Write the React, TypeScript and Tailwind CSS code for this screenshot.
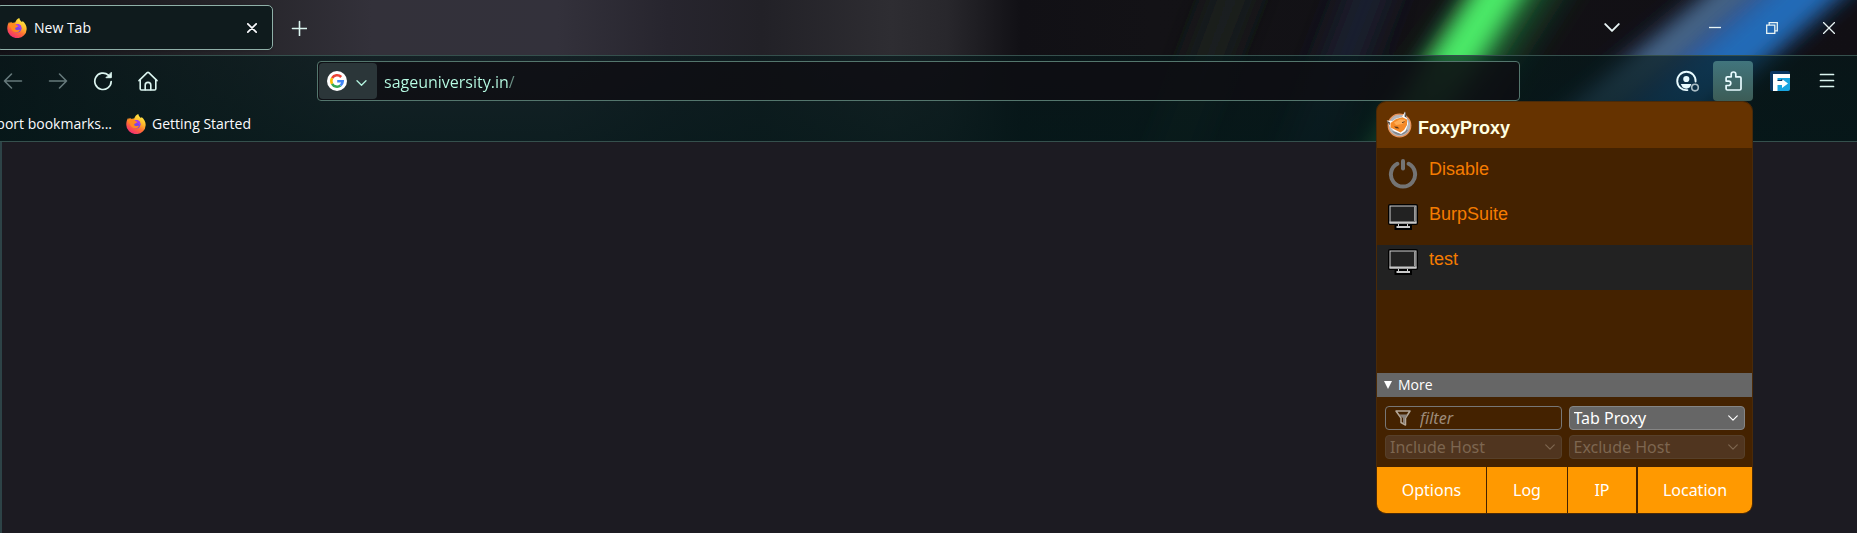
import React from "react";

function Wallpaper() {
  return (
    <svg
      aria-hidden="true"
      className="absolute inset-0 h-full w-full"
      viewBox="0 0 1857 142"
      preserveAspectRatio="none"
    >
      <defs>
        <linearGradient id="haze" x1="0" x2="1" y1="0" y2="0">
          <stop offset="0" stopColor="#131217" />
          <stop offset="0.06" stopColor="#1c1b20" />
          <stop offset="0.13" stopColor="#26252a" />
          <stop offset="0.2" stopColor="#33313a" />
          <stop offset="0.3" stopColor="#33313b" />
          <stop offset="0.36" stopColor="#27252e" />
          <stop offset="0.41" stopColor="#222127" />
          <stop offset="0.48" stopColor="#2e2d32" />
          <stop offset="0.51" stopColor="#28272c" />
          <stop offset="0.55" stopColor="#111015" />
          <stop offset="0.62" stopColor="#131216" />
          <stop offset="1" stopColor="#110f14" />
        </linearGradient>
        <filter id="soft" x="-30%" y="-30%" width="160%" height="160%">
          <feGaussianBlur stdDeviation="11" />
        </filter>
        <filter id="wide" x="-50%" y="-50%" width="200%" height="200%">
          <feGaussianBlur stdDeviation="17" />
        </filter>
      </defs>
      <rect width="1857" height="142" fill="url(#haze)" />
      <g filter="url(#wide)">
        <path d="M1238-60 1270-60 1170 200 1140 200Z" fill="#1a2820" />
        <path d="M1370-60 1410-60 1310 200 1270 200Z" fill="#1a2436" />
        <path d="M1510-60 1590-60 1400 240 1310 240Z" fill="#1f6a34" opacity="0.7" />
        <path d="M1790-60 1880-60 1625 160 1520 160Z" fill="#2a4a86" />
      </g>
      <g filter="url(#soft)">
        <path d="M1506-60 1557-60 1392 200 1336 200Z" fill="#4ceb68" />
        <path d="M1776-60 1814-60 1556 160 1512 160Z" fill="#4c6c8c" />
        <path d="M1828-60 1902-60 1652 160 1576 160Z" fill="#246cb8" />
      </g>
    </svg>
  );
}

function FirefoxLogo({ id }: { id: string }) {
  return (
    <svg aria-hidden="true" className="size-5 shrink-0" viewBox="0 0 20 20">
      <defs>
        <linearGradient id={id} x1="0.8" y1="0.05" x2="0.25" y2="1">
          <stop offset="0" stopColor="#fff04a" />
          <stop offset="0.35" stopColor="#ffb72a" />
          <stop offset="0.62" stopColor="#ff6b36" />
          <stop offset="1" stopColor="#f0257a" />
        </linearGradient>
      </defs>
      <path
        d="M12.3 0c.3 2 1.3 2.9 2.7 4 .5-.2.6-.5.6-1 2.700 2.100 4.100 5 4.100 8A9.700 9.200 0 0 1 .3 10.800C.2 8 .9 5.600 2.200 3.700l.5 1.800 1.300-1.800 1.200 1.500c1-.5 2-.7 3-.6.6-2 2-3.800 4.100-4.600Z"
        fill={`url(#${id})`}
      />
      <circle cx="10.300" cy="10.200" r="4.200" fill="#7a45e8" />
      <path d="M8 6.500c2-.9 4.400-.4 5.600 1.200.9 1.300.9 3 .2 4.300-.3-1.500-1-2.300-2.200-2.600Z" fill="#a33cf0" />
      <path
        d="M2.500 5.700c1.600-1.300 3.800-1.400 5.600-.4L9.900 7.400c1 .1 1.300.4 1.200.9-.5 1-1.900.9-2.800 1.700-.5 1 .3 1.900 1.300 2.100 1.300.2 2.100-.8 3.300-.2-.6 1.500-2.100 2.400-3.700 2.300-3-.1-5.500-2.500-5.400-5.400-.7.8-1 1.700-1 2.600Z"
        fill="#ff8a1f"
      />
    </svg>
  );
}

function GoogleLogo() {
  return (
    <svg aria-hidden="true" className="size-5" viewBox="0 0 20 20">
      <circle cx="10" cy="10" r="10" fill="#fff" />
      <g fill="none" strokeWidth="2.600">
        <path d="M14.200 6A5.700 5.700 0 0 0 5.100 7.200" stroke="#ea4335" />
        <path d="M5.100 7.200a5.700 5.700 0 0 0 0 5.600" stroke="#fbbc05" />
        <path d="M5.100 12.800a5.700 5.700 0 0 0 8.400 1.700" stroke="#34a853" />
        <path d="M13.500 14.500A5.700 5.700 0 0 0 15.700 10.200H10.200" stroke="#4285f4" />
      </g>
    </svg>
  );
}

function Chevron({ className }: { className: string }) {
  return (
    <svg aria-hidden="true" className={className} viewBox="0 0 14 8" fill="none" stroke="currentColor" strokeWidth="1.700" strokeLinecap="round" strokeLinejoin="round">
      <path d="M1 1l6 6 6-6" />
    </svg>
  );
}

function FoxLogo() {
  return (
    <svg aria-hidden="true" className="size-[27px] shrink-0" viewBox="0 0 27 27">
      <circle cx="13.500" cy="14.500" r="11.300" fill="#b4b6ba" stroke="#e8935a" strokeWidth="1.200" />
      <path d="M6 20a9.500 9.500 0 0 0 16-1l-4-1-4 4Z" fill="#85878c" />
      <path d="M.8 9.500 6.500 10 10 7.500l6-1.500L19 .5l1.800 6.500 1.200 6L19.500 20l-4.500 3L8 20l-4-4Z" fill="#fff" />
      <path d="M.8 9.500 4 11.500l-.5 3ZM19 .5l1.800 6.500-2.300-1.500Z" fill="#4c4a4a" />
      <path d="M4.500 12 10 8l6.500-1.800 4.500 2.300v5.500l-3 5-3.500 2.500-5-2.500L4.500 16.500Z" fill="#f58a28" />
      <path d="M8 11.500l6-3.300 5.500.5-3 4.300-6.500 1Z" fill="#ffad55" />
      <path d="M8 15.500l3.500.2 1.800 1.800-3.300-.2Z" fill="#5a3417" />
      <path d="M16 11.700l2.500-1" stroke="#5a3417" strokeWidth="0.900" />
    </svg>
  );
}

function Monitor() {
  return (
    <svg aria-hidden="true" className="h-[26px] w-[30px] shrink-0" viewBox="0 0 30 26">
      <rect width="30" height="21" rx="2" fill="#000" />
      <path d="M6.500 20h17.500v6H6.500z" fill="#000" />
      <rect x="2" y="2" width="26" height="17" fill="#222" stroke="#d0d0d0" strokeWidth="1" />
      <path d="M1.500 17.500h27v2h-27z" fill="#c8c8c8" />
      <path d="M26 2.500h1.500V17H26z" fill="#999" />
      <path d="M10.500 20v2.500M19.500 20v2.500" stroke="#d0d0d0" />
      <path d="M8.500 22h13.500v2H8.500z" fill="#c8c8c8" />
    </svg>
  );
}

function Power() {
  return (
    <svg aria-hidden="true" className="h-[30px] w-[30px] shrink-0" viewBox="0 0 30 30" fill="none" stroke="#747474" strokeWidth="4" strokeLinecap="round">
      <path d="M9.300 4.800a12.100 12.100 0 1 0 11.400 0" />
      <path d="M15 2v7.600" />
    </svg>
  );
}

function TabStrip() {
  return (
    <div className="relative flex h-[55px] items-start justify-between pt-[5px]">
      <div className="flex items-center">
        <div className="-ml-1 flex h-[45px] w-[277px] items-center rounded-[5px] border border-[#8fb0a8] bg-[#0f1b1d] pl-[10px] pr-[10px] shadow-sm">
          <FirefoxLogo id="tab-flame" />
          <span className="ml-[7px] flex-1 text-sm text-[#fbfbfe]">New Tab</span>
          <button aria-label="Close tab" className="flex h-6 w-5 items-center justify-center text-[#fbfbfe]">
            <svg className="size-[10px]" viewBox="0 0 10 10" stroke="currentColor" strokeWidth="1.700" strokeLinecap="round">
              <path d="M.8.8l8.400 8.400M9.200.8.8 9.200" />
            </svg>
          </button>
        </div>
        <button aria-label="Open a new tab" className="ml-2 flex size-9 items-center justify-center text-[#dcf5f0]">
          <svg className="size-4" viewBox="0 0 16 16" stroke="currentColor" strokeWidth="1.600" strokeLinecap="round">
            <path d="M8.500 1.500v14M1.500 8.500h14" />
          </svg>
        </button>
      </div>
      <div className="flex h-[45px] items-center text-[#e8f4f4]">
        <button aria-label="List all tabs" className="mr-11 flex h-full w-[60px] items-center justify-center">
          <Chevron className="h-[9px] w-4" />
        </button>
        <button aria-label="Minimize" className="flex h-full w-[57px] items-center justify-center">
          <svg className="size-3" viewBox="0 0 12 12" stroke="currentColor" strokeWidth="1.300"><path d="M0 5.500h12" /></svg>
        </button>
        <button aria-label="Restore" className="flex h-full w-[57px] items-center justify-center">
          <svg className="size-3" viewBox="0 0 12 12" stroke="currentColor" fill="none" strokeWidth="1.300">
            <path d="M.7 3.200h8.100v8.100H.7zM3.200 3V.7h8.100v8.100H9" />
          </svg>
        </button>
        <button aria-label="Close" className="flex h-full w-[57px] items-center justify-center">
          <svg className="size-3" viewBox="0 0 12 12" stroke="currentColor" strokeWidth="1.300"><path d="M0 0l12 12M12 0 0 12" /></svg>
        </button>
      </div>
    </div>
  );
}

function NavBar() {
  const nav = "flex h-9 w-9 shrink-0 items-center justify-center";
  const tool = "flex h-10 w-10 shrink-0 items-center justify-center rounded-[4px]";
  return (
    <div className="flex h-[49px] items-center pr-[10px] text-[#dcf5f0]">
      <nav aria-label="History" className="-ml-[5px] flex gap-[9px]">
        <button aria-label="Back" disabled className={nav + " text-[#66797b]"}>
          <svg className="size-5" viewBox="0 0 20 20" fill="none" stroke="currentColor" strokeWidth="1.600" strokeLinecap="round" strokeLinejoin="round">
            <path d="M18.500 10h-17M8.500 3l-7 7 7 7" />
          </svg>
        </button>
        <button aria-label="Forward" disabled className={nav + " text-[#66797b]"}>
          <svg className="size-5" viewBox="0 0 20 20" fill="none" stroke="currentColor" strokeWidth="1.600" strokeLinecap="round" strokeLinejoin="round">
            <path d="M1.500 10h17M11.500 3l7 7-7 7" />
          </svg>
        </button>
        <button aria-label="Reload" className={nav}>
          <svg className="size-5" viewBox="0 0 20 20" fill="none" stroke="currentColor" strokeWidth="1.700" strokeLinecap="round">
            <path d="M18.200 10.500a8.200 8.200 0 1 1-2.800-6.400" />
            <path d="M18.300 1.700v5h-5Z" fill="currentColor" strokeWidth="1" strokeLinejoin="round" />
          </svg>
        </button>
        <button aria-label="Home" className={nav}>
          <svg className="size-5" viewBox="0 0 20 20" fill="none" stroke="currentColor" strokeWidth="1.600" strokeLinecap="round" strokeLinejoin="round">
            <path d="M1 9.600 9.200 1.700a1.200 1.200 0 0 1 1.600 0L19 9.600" />
            <path d="M2.200 8.600v9.100A1.300 1.300 0 0 0 3.500 19h13a1.300 1.300 0 0 0 1.300-1.300V8.600" />
            <path d="M7.200 18.800v-4.600a2.800 2.800 0 0 1 5.600 0v4.600" />
          </svg>
        </button>
      </nav>

      <div className="ml-[151px] mr-[146px] flex h-10 min-w-0 flex-1 items-center rounded-[4px] border border-[#54766d] bg-[#0f0c11]/75 p-px">
        <button aria-label="Search with Google" className="flex h-9 w-[58px] items-center gap-[9px] rounded-[4px] bg-[#2b3639] pl-2 text-[#b5f5e0]">
          <GoogleLogo />
          <Chevron className="mt-1 h-[6px] w-[11px]" />
        </button>
        <input
          aria-label="Address"
          defaultValue="sageuniversity.in/"
          className="ml-[7px] mt-[3px] h-8 min-w-0 flex-1 bg-linear-to-r from-[#b9ffe6] from-[125px] to-[#6b8f84] to-[125px] bg-clip-text text-base text-transparent outline-none"
        />
      </div>

      <div className="flex gap-[7px]">
        <button aria-label="Account" className={tool}>
          <svg className="h-[22px] w-[22px] overflow-visible" viewBox="0 0 22 22" fill="none" stroke="#e8fbff">
            <path d="M20.600 11.500a9.200 9.200 0 1 0-8.200 8.600" strokeWidth="1.900" strokeLinecap="round" />
            <circle cx="11.300" cy="9" r="3.100" fill="#e8fbff" stroke="none" />
            <path d="M5.800 14h10.600l-1.500 3.200a6 6 0 0 1-7.400 0Z" fill="#e8fbff" stroke="none" />
            <circle cx="20" cy="17.600" r="3.300" stroke="#a9bcc4" strokeWidth="1.600" />
          </svg>
        </button>
        <button aria-label="Extensions" aria-expanded="true" className={tool + " bg-linear-to-b from-[#41757d] to-[#3c5c56]"}>
          <svg className="size-5" viewBox="-2 0 20 20" fill="none" stroke="#e8fbff" strokeWidth="1.700" strokeLinejoin="round">
            <path d="M6.200 5.800V3.300a2.300 2.300 0 0 1 4.600 0v2.500h3.900a1.300 1.300 0 0 1 1.300 1.300v10.600a1.300 1.300 0 0 1-1.300 1.300H2.400A1.300 1.300 0 0 1 1.100 17.700v-3.200h2.500a2.200 2.200 0 0 0 0-4.400H1.100v-3a1.300 1.300 0 0 1 1.300-1.300Z" />
          </svg>
        </button>
        <button aria-label="FoxyProxy shortcut" className={tool}>
          <svg className="size-5" viewBox="0 0 20 20">
            <rect width="20" height="20" rx="2" fill="#0a3561" />
            <path d="M3 20 3 3h17v15a2 2 0 0 1-2 2Z" fill="#18a5e0" />
            <path d="M3 3h17v4H7.500v2.500H12V8l6 4.500-6 4.500v-3H7.500v6H3Z" fill="#fff" />
            <path d="M7.500 9.500H12V8" fill="none" stroke="#0a3561" strokeWidth="1" />
          </svg>
        </button>
        <button aria-label="Open application menu" className={tool}>
          <svg className="h-4 w-4" viewBox="0 0 16 16" stroke="currentColor" strokeWidth="1.700" strokeLinecap="round">
            <path d="M1.500 1.500h13M1.500 7.500h13M1.500 13.500h13" />
          </svg>
        </button>
      </div>
    </div>
  );
}

function BookmarksBar() {
  return (
    <div className="flex h-9 items-center overflow-hidden whitespace-nowrap pt-px text-sm leading-5 text-[#fbfbfe]">
      <div className="flex w-[112px] shrink-0 justify-end">
        <a href="#import">Import bookmarks...</a>
      </div>
      <a href="#start" className="ml-[14px] flex items-center gap-[6px]">
        <FirefoxLogo id="bookmark-flame" />
        Getting Started
      </a>
    </div>
  );
}

const proxies = [
  { name: "Disable", icon: <Power />, active: false },
  { name: "BurpSuite", icon: <Monitor />, active: false },
  { name: "test", icon: <Monitor />, active: true },
];

function HostSelect({ label, disabled }: { label: string; disabled?: boolean }) {
  return (
    <div className={"relative " + (disabled ? "text-[#7d6650]" : "text-white")}>
      <select
        aria-label={label}
        disabled={disabled}
        className={
          "block h-6 w-full appearance-none rounded-[4px] border pl-1 pr-6 text-base leading-[22px] opacity-100 outline-none " +
          (disabled ? "border-[#57402a] bg-[#50351f]" : "border-[#858585] bg-[#666]")
        }
      >
        <option>{label}</option>
      </select>
      <span className="pointer-events-none absolute inset-y-0 right-[7px] flex items-center">
        <Chevron className="h-[6px] w-[10px]" />
      </span>
    </div>
  );
}

function ProxyPopup() {
  return (
    <section
      aria-label="FoxyProxy"
      className="absolute right-[104px] top-[101px] w-[377px] overflow-hidden rounded-[10px] border border-[#4a2a08] bg-[#442200] font-['Noto_Sans',sans-serif]"
    >
      <header className="flex h-[46px] items-start gap-[5px] bg-[#663300] pl-[9px] pt-[9px]">
        <FoxLogo />
        <h1 className="mt-[3px] font-['Liberation_Sans',sans-serif] text-lg font-bold leading-[28px] text-[#ffffe0]">FoxyProxy</h1>
      </header>
      <ul className="mt-[7px] h-[218px] font-['Liberation_Sans',sans-serif] text-lg text-[#f57c00]">
        {proxies.map((p) => (
          <li key={p.name} className={p.active ? "bg-[#222]" : ""}>
            <button className="flex h-[45px] w-full items-start gap-[11px] pl-[11px] pt-1 text-left leading-[20px]">
              {p.icon}
              <span>{p.name}</span>
            </button>
          </li>
        ))}
      </ul>
      <details open>
        <summary className="flex h-6 cursor-default list-none items-center gap-[6px] bg-[#666] pl-[7px] font-['Open_Sans',sans-serif] text-sm text-white">
          <svg aria-hidden="true" className="h-[8px] w-[8px]" viewBox="0 0 8 8"><path d="M0 0h8L4 8Z" fill="#fff" /></svg>
          More
        </summary>
        <div className="grid grid-cols-2 gap-x-[7px] gap-y-[5px] pb-2 pl-2 pr-[7px] pt-[9px]">
          <div className="flex h-6 items-center gap-[9px] rounded-[4px] border border-[#777] pl-[9px]">
            <svg aria-hidden="true" className="h-4 w-4 shrink-0" viewBox="0 0 16 16" fill="none" stroke="#b5a898" strokeWidth="1.500" strokeLinejoin="round">
              <path d="M1 1h14l-4.500 7v7L6 12.500V8Z" />
              <path d="M3.500 4.500h9L10 8.500v5.500L8 13V8Z" fill="#8a8078" stroke="none" />
            </svg>
            <input aria-label="Filter" placeholder="filter" className="h-[22px] w-full min-w-0 bg-transparent text-base italic outline-none placeholder:text-[#9c8b7a]" />
          </div>
          <HostSelect label="Tab Proxy" />
          <HostSelect label="Include Host" disabled />
          <HostSelect label="Exclude Host" disabled />
        </div>
      </details>
      <footer className="flex h-[46px] gap-px text-base text-white">
        <button className="w-[109px] bg-[#ff9900]">Options</button>
        <button className="w-[80px] bg-[#ff9900]">Log</button>
        <button className="w-[68px] bg-[#ff9900]">IP</button>
        <button className="ml-px flex-1 bg-[#ff9900]">Location</button>
      </footer>
    </section>
  );
}

export default function App() {
  return (
    <div className="relative flex min-h-screen flex-col overflow-hidden bg-[#1c1b22] font-['Open_Sans',sans-serif]">
      <header className="relative overflow-hidden">
        <Wallpaper />
        <TabStrip />
        <div className="relative border-y border-[#35504d] bg-linear-to-b from-[#04191a]/65 to-[#04191a]/80">
          <NavBar />
          <BookmarksBar />
        </div>
      </header>
      <main className="flex-1 border-l-2 border-[#2d4347]" />
      <ProxyPopup />
    </div>
  );
}
